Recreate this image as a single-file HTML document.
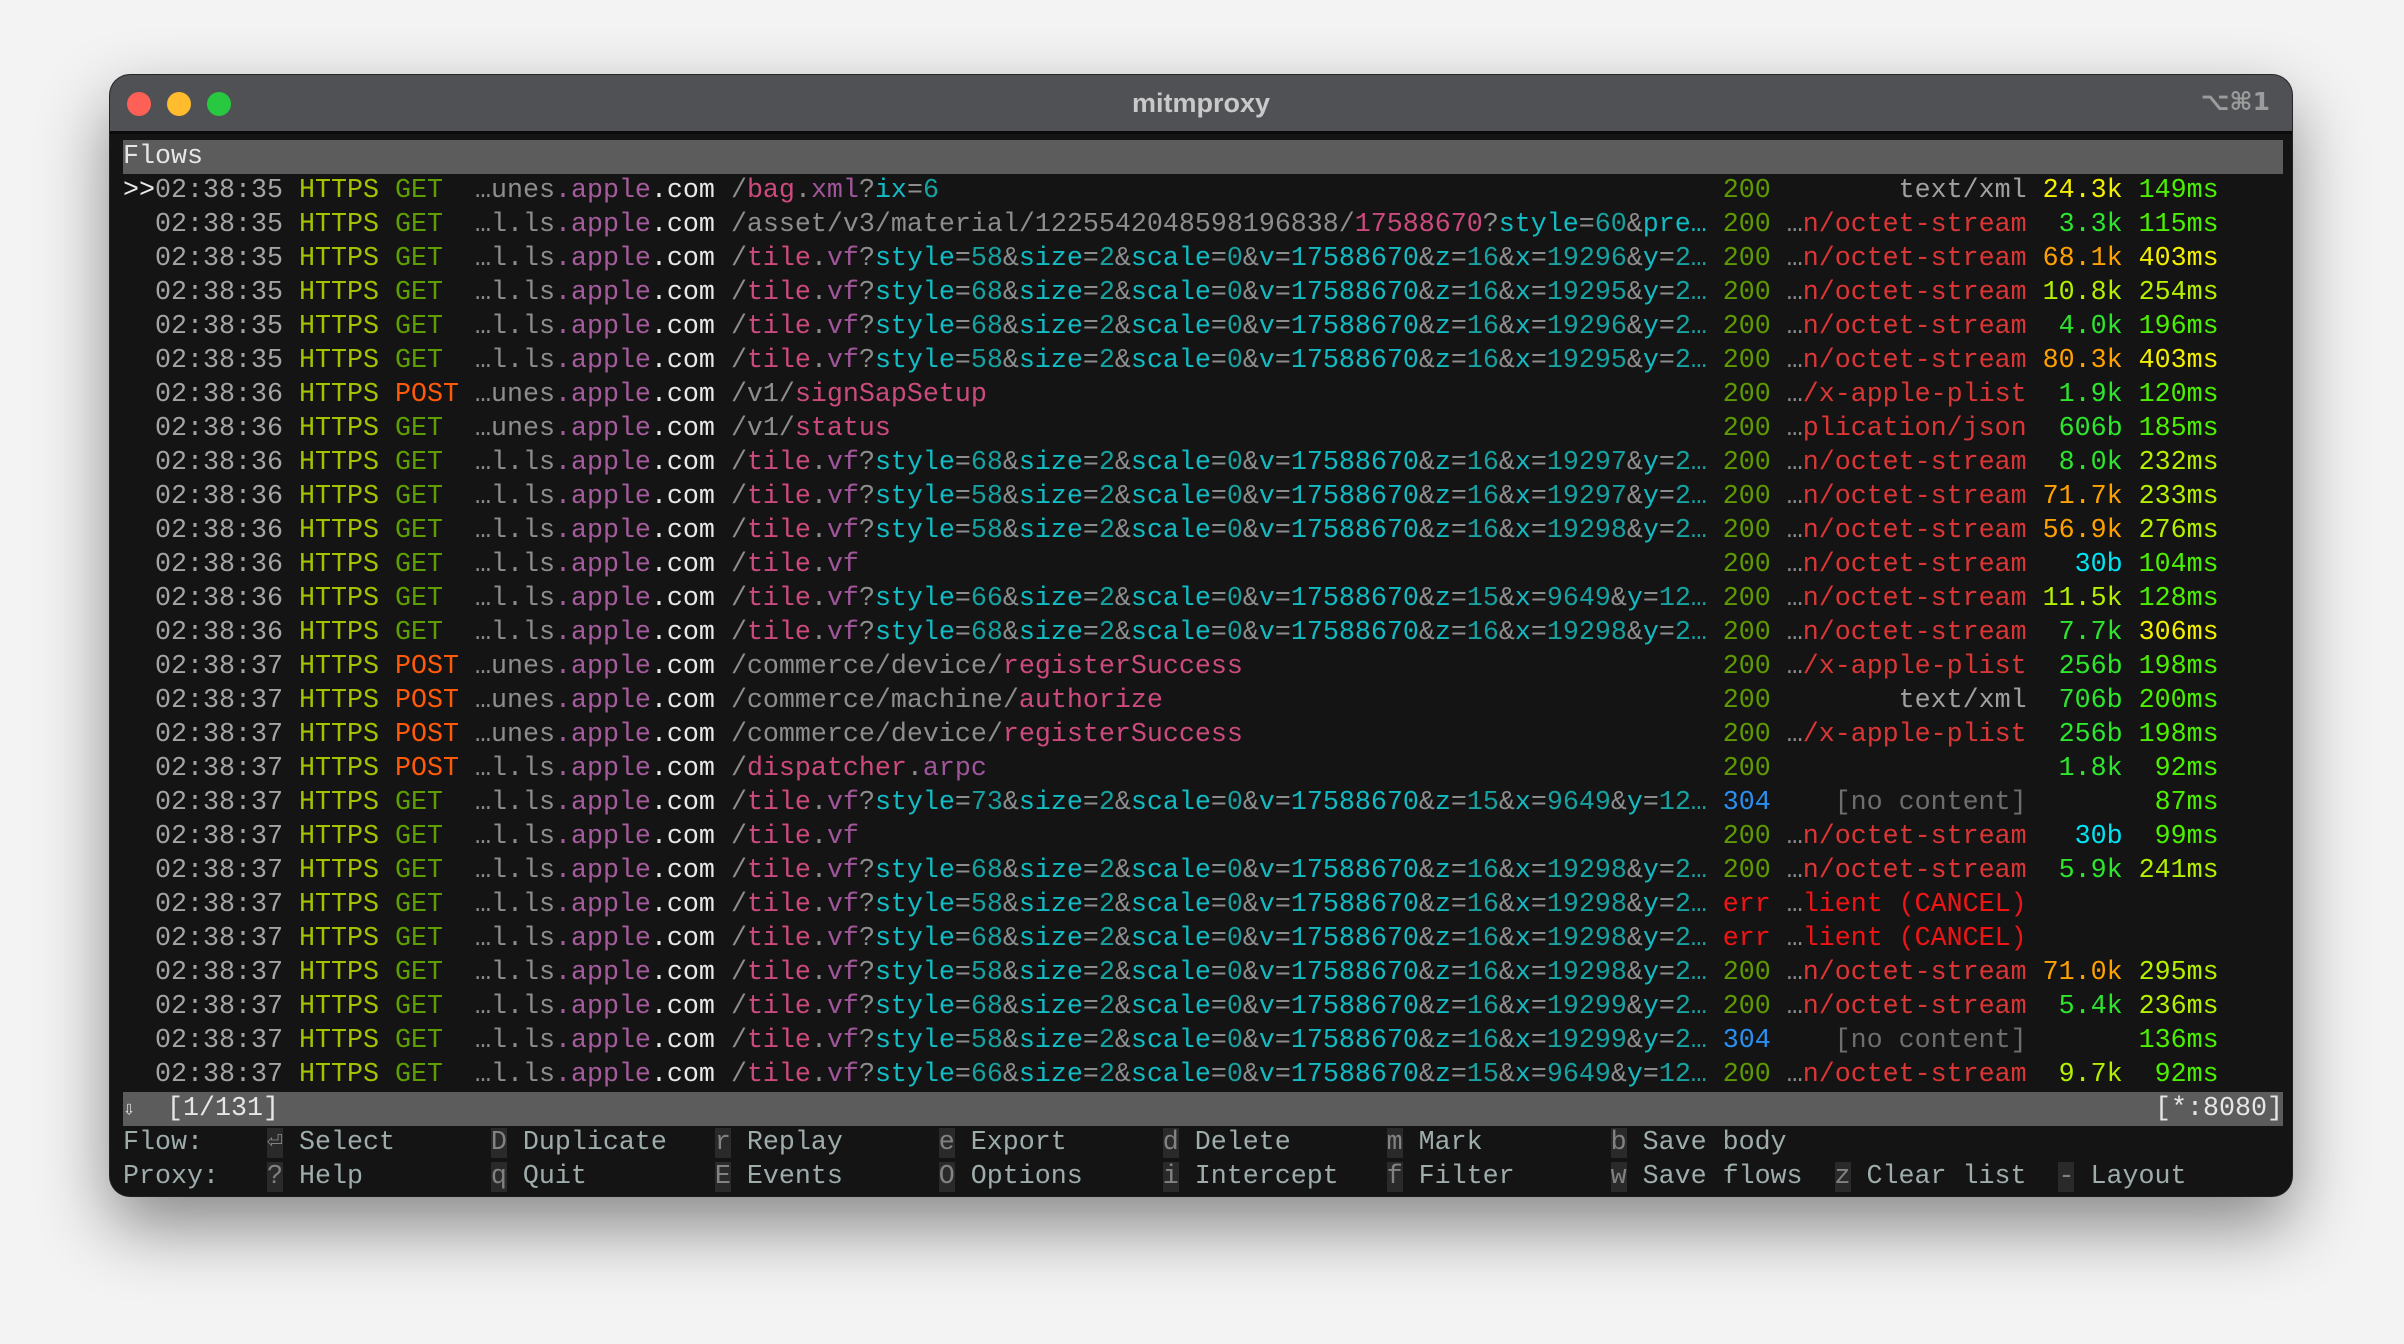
<!DOCTYPE html>
<html><head><meta charset="utf-8"><style>
html,body{margin:0;padding:0;width:2404px;height:1344px;background:#f3f3f3;overflow:hidden}
.win{position:absolute;left:110px;top:75px;width:2182px;height:1121px;border-radius:20px;background:#141414;box-shadow:0 30px 70px rgba(0,0,0,.45),0 0 0 1px #2a2a2a;overflow:hidden}
.tb{position:absolute;left:0;top:0;width:100%;height:56px;background:#505155;border-bottom:3px solid #0b0b0b}
.tt{position:absolute;left:0;right:0;top:13px;text-align:center;font:bold 27px "Liberation Sans",sans-serif;color:#c9c9c9}
.sc{position:absolute;right:22px;top:12px;font:bold 25px "DejaVu Sans","Liberation Sans",sans-serif;color:#9c9c9c}
.dot{position:absolute;top:17px;width:24px;height:24px;border-radius:50%}
.term{position:absolute;left:13px;top:65px;font-family:"Liberation Mono","DejaVu Sans Mono",monospace;font-size:26.667px;line-height:34px;color:#a8a8a8}
.term div{height:34px;width:2160px;white-space:pre;overflow:hidden}
.bar{background:#5c5c5c;color:#e6e6e6}
t{color:#a4a4a4}w{color:#a6c100}m{color:#5f9e00}o{color:#ff5a0a}d{color:#8d8d8d}l{color:#a45c9c}c{color:#e8e8e8}
r{color:#cc4a7e}y{color:#a0569a}k{color:#12bcc4}v{color:#17a2a2}n{color:#5e9a00}e{color:#db3636}z{color:#f01414}
bl{color:#2b8ff0}gr{color:#a0a0a0}nc{color:#6e6e6e}
x1{color:#2ee62e}x2{color:#f2f000}x3{color:#ffa200}x4{color:#b4f000}x5{color:#00e4f4}x6{color:#4cf000}
pp{display:inline-block;width:61ch}cc{display:inline-block;width:15ch;text-align:right}ss{display:inline-block;width:5ch;text-align:right}
g{display:inline-block;width:14ch;color:#9eacac}kk{background:#2a2a2a;color:#828282}
</style></head><body>
<div class="win">
<div class="tb"><div class="dot" style="left:17px;background:#fe5f57"></div><div class="dot" style="left:57px;background:#febc2e"></div><div class="dot" style="left:97px;background:#28c840"></div><div class="tt">mitmproxy</div><div class="sc">⌥⌘1</div></div>
<div class="term">
<div class="bar">Flows</div>
<div><c>&gt;&gt;</c><t>02:38:35</t> <w>HTTPS</w> <m>GET </m> <d>…unes</d><l>.apple</l><c>.com</c> <pp><d>/</d><r>bag</r><d>.</d><y>xml</y><d>?</d><k>ix</k><d>=</d><v>6</v></pp> <n>200</n> <cc><gr>text/xml</gr></cc> <ss><x2>24.3k</x2></ss> <ss><x6>149ms</x6></ss></div>
<div>  <t>02:38:35</t> <w>HTTPS</w> <m>GET </m> <d>…l.ls</d><l>.apple</l><c>.com</c> <pp><d>/asset/v3/material/1225542048598196838/</d><r>17588670</r><d>?</d><k>style</k><d>=</d><v>60</v><d>&amp;</d><k>pre…</k></pp> <n>200</n> <cc><d>…</d><e>n/octet-stream</e></cc> <ss><x1>3.3k</x1></ss> <ss><x6>115ms</x6></ss></div>
<div>  <t>02:38:35</t> <w>HTTPS</w> <m>GET </m> <d>…l.ls</d><l>.apple</l><c>.com</c> <pp><d>/</d><r>tile</r><d>.</d><y>vf</y><d>?</d><k>style</k><d>=</d><v>58</v><d>&amp;</d><k>size</k><d>=</d><v>2</v><d>&amp;</d><k>scale</k><d>=</d><v>0</v><d>&amp;</d><k>v</k><d>=</d><k>17588670</k><d>&amp;</d><k>z</k><d>=</d><v>16</v><d>&amp;</d><k>x</k><d>=</d><v>19296</v><d>&amp;</d><k>y</k><d>=</d><v>2…</v></pp> <n>200</n> <cc><d>…</d><e>n/octet-stream</e></cc> <ss><x3>68.1k</x3></ss> <ss><x2>403ms</x2></ss></div>
<div>  <t>02:38:35</t> <w>HTTPS</w> <m>GET </m> <d>…l.ls</d><l>.apple</l><c>.com</c> <pp><d>/</d><r>tile</r><d>.</d><y>vf</y><d>?</d><k>style</k><d>=</d><v>68</v><d>&amp;</d><k>size</k><d>=</d><v>2</v><d>&amp;</d><k>scale</k><d>=</d><v>0</v><d>&amp;</d><k>v</k><d>=</d><k>17588670</k><d>&amp;</d><k>z</k><d>=</d><v>16</v><d>&amp;</d><k>x</k><d>=</d><v>19295</v><d>&amp;</d><k>y</k><d>=</d><v>2…</v></pp> <n>200</n> <cc><d>…</d><e>n/octet-stream</e></cc> <ss><x4>10.8k</x4></ss> <ss><x4>254ms</x4></ss></div>
<div>  <t>02:38:35</t> <w>HTTPS</w> <m>GET </m> <d>…l.ls</d><l>.apple</l><c>.com</c> <pp><d>/</d><r>tile</r><d>.</d><y>vf</y><d>?</d><k>style</k><d>=</d><v>68</v><d>&amp;</d><k>size</k><d>=</d><v>2</v><d>&amp;</d><k>scale</k><d>=</d><v>0</v><d>&amp;</d><k>v</k><d>=</d><k>17588670</k><d>&amp;</d><k>z</k><d>=</d><v>16</v><d>&amp;</d><k>x</k><d>=</d><v>19296</v><d>&amp;</d><k>y</k><d>=</d><v>2…</v></pp> <n>200</n> <cc><d>…</d><e>n/octet-stream</e></cc> <ss><x1>4.0k</x1></ss> <ss><x6>196ms</x6></ss></div>
<div>  <t>02:38:35</t> <w>HTTPS</w> <m>GET </m> <d>…l.ls</d><l>.apple</l><c>.com</c> <pp><d>/</d><r>tile</r><d>.</d><y>vf</y><d>?</d><k>style</k><d>=</d><v>58</v><d>&amp;</d><k>size</k><d>=</d><v>2</v><d>&amp;</d><k>scale</k><d>=</d><v>0</v><d>&amp;</d><k>v</k><d>=</d><k>17588670</k><d>&amp;</d><k>z</k><d>=</d><v>16</v><d>&amp;</d><k>x</k><d>=</d><v>19295</v><d>&amp;</d><k>y</k><d>=</d><v>2…</v></pp> <n>200</n> <cc><d>…</d><e>n/octet-stream</e></cc> <ss><x3>80.3k</x3></ss> <ss><x2>403ms</x2></ss></div>
<div>  <t>02:38:36</t> <w>HTTPS</w> <o>POST</o> <d>…unes</d><l>.apple</l><c>.com</c> <pp><d>/v1/</d><r>signSapSetup</r></pp> <n>200</n> <cc><d>…</d><e>/x-apple-plist</e></cc> <ss><x1>1.9k</x1></ss> <ss><x6>120ms</x6></ss></div>
<div>  <t>02:38:36</t> <w>HTTPS</w> <m>GET </m> <d>…unes</d><l>.apple</l><c>.com</c> <pp><d>/v1/</d><r>status</r></pp> <n>200</n> <cc><d>…</d><e>plication/json</e></cc> <ss><x1>606b</x1></ss> <ss><x6>185ms</x6></ss></div>
<div>  <t>02:38:36</t> <w>HTTPS</w> <m>GET </m> <d>…l.ls</d><l>.apple</l><c>.com</c> <pp><d>/</d><r>tile</r><d>.</d><y>vf</y><d>?</d><k>style</k><d>=</d><v>68</v><d>&amp;</d><k>size</k><d>=</d><v>2</v><d>&amp;</d><k>scale</k><d>=</d><v>0</v><d>&amp;</d><k>v</k><d>=</d><k>17588670</k><d>&amp;</d><k>z</k><d>=</d><v>16</v><d>&amp;</d><k>x</k><d>=</d><v>19297</v><d>&amp;</d><k>y</k><d>=</d><v>2…</v></pp> <n>200</n> <cc><d>…</d><e>n/octet-stream</e></cc> <ss><x1>8.0k</x1></ss> <ss><x4>232ms</x4></ss></div>
<div>  <t>02:38:36</t> <w>HTTPS</w> <m>GET </m> <d>…l.ls</d><l>.apple</l><c>.com</c> <pp><d>/</d><r>tile</r><d>.</d><y>vf</y><d>?</d><k>style</k><d>=</d><v>58</v><d>&amp;</d><k>size</k><d>=</d><v>2</v><d>&amp;</d><k>scale</k><d>=</d><v>0</v><d>&amp;</d><k>v</k><d>=</d><k>17588670</k><d>&amp;</d><k>z</k><d>=</d><v>16</v><d>&amp;</d><k>x</k><d>=</d><v>19297</v><d>&amp;</d><k>y</k><d>=</d><v>2…</v></pp> <n>200</n> <cc><d>…</d><e>n/octet-stream</e></cc> <ss><x3>71.7k</x3></ss> <ss><x4>233ms</x4></ss></div>
<div>  <t>02:38:36</t> <w>HTTPS</w> <m>GET </m> <d>…l.ls</d><l>.apple</l><c>.com</c> <pp><d>/</d><r>tile</r><d>.</d><y>vf</y><d>?</d><k>style</k><d>=</d><v>58</v><d>&amp;</d><k>size</k><d>=</d><v>2</v><d>&amp;</d><k>scale</k><d>=</d><v>0</v><d>&amp;</d><k>v</k><d>=</d><k>17588670</k><d>&amp;</d><k>z</k><d>=</d><v>16</v><d>&amp;</d><k>x</k><d>=</d><v>19298</v><d>&amp;</d><k>y</k><d>=</d><v>2…</v></pp> <n>200</n> <cc><d>…</d><e>n/octet-stream</e></cc> <ss><x3>56.9k</x3></ss> <ss><x4>276ms</x4></ss></div>
<div>  <t>02:38:36</t> <w>HTTPS</w> <m>GET </m> <d>…l.ls</d><l>.apple</l><c>.com</c> <pp><d>/</d><r>tile</r><d>.</d><y>vf</y></pp> <n>200</n> <cc><d>…</d><e>n/octet-stream</e></cc> <ss><x5>30b</x5></ss> <ss><x6>104ms</x6></ss></div>
<div>  <t>02:38:36</t> <w>HTTPS</w> <m>GET </m> <d>…l.ls</d><l>.apple</l><c>.com</c> <pp><d>/</d><r>tile</r><d>.</d><y>vf</y><d>?</d><k>style</k><d>=</d><v>66</v><d>&amp;</d><k>size</k><d>=</d><v>2</v><d>&amp;</d><k>scale</k><d>=</d><v>0</v><d>&amp;</d><k>v</k><d>=</d><k>17588670</k><d>&amp;</d><k>z</k><d>=</d><v>15</v><d>&amp;</d><k>x</k><d>=</d><v>9649</v><d>&amp;</d><k>y</k><d>=</d><v>12…</v></pp> <n>200</n> <cc><d>…</d><e>n/octet-stream</e></cc> <ss><x4>11.5k</x4></ss> <ss><x6>128ms</x6></ss></div>
<div>  <t>02:38:36</t> <w>HTTPS</w> <m>GET </m> <d>…l.ls</d><l>.apple</l><c>.com</c> <pp><d>/</d><r>tile</r><d>.</d><y>vf</y><d>?</d><k>style</k><d>=</d><v>68</v><d>&amp;</d><k>size</k><d>=</d><v>2</v><d>&amp;</d><k>scale</k><d>=</d><v>0</v><d>&amp;</d><k>v</k><d>=</d><k>17588670</k><d>&amp;</d><k>z</k><d>=</d><v>16</v><d>&amp;</d><k>x</k><d>=</d><v>19298</v><d>&amp;</d><k>y</k><d>=</d><v>2…</v></pp> <n>200</n> <cc><d>…</d><e>n/octet-stream</e></cc> <ss><x1>7.7k</x1></ss> <ss><x2>306ms</x2></ss></div>
<div>  <t>02:38:37</t> <w>HTTPS</w> <o>POST</o> <d>…unes</d><l>.apple</l><c>.com</c> <pp><d>/commerce/device/</d><r>registerSuccess</r></pp> <n>200</n> <cc><d>…</d><e>/x-apple-plist</e></cc> <ss><x1>256b</x1></ss> <ss><x6>198ms</x6></ss></div>
<div>  <t>02:38:37</t> <w>HTTPS</w> <o>POST</o> <d>…unes</d><l>.apple</l><c>.com</c> <pp><d>/commerce/machine/</d><r>authorize</r></pp> <n>200</n> <cc><gr>text/xml</gr></cc> <ss><x1>706b</x1></ss> <ss><x6>200ms</x6></ss></div>
<div>  <t>02:38:37</t> <w>HTTPS</w> <o>POST</o> <d>…unes</d><l>.apple</l><c>.com</c> <pp><d>/commerce/device/</d><r>registerSuccess</r></pp> <n>200</n> <cc><d>…</d><e>/x-apple-plist</e></cc> <ss><x1>256b</x1></ss> <ss><x6>198ms</x6></ss></div>
<div>  <t>02:38:37</t> <w>HTTPS</w> <o>POST</o> <d>…l.ls</d><l>.apple</l><c>.com</c> <pp><d>/</d><r>dispatcher</r><d>.</d><y>arpc</y></pp> <n>200</n> <cc></cc> <ss><x1>1.8k</x1></ss> <ss><x6>92ms</x6></ss></div>
<div>  <t>02:38:37</t> <w>HTTPS</w> <m>GET </m> <d>…l.ls</d><l>.apple</l><c>.com</c> <pp><d>/</d><r>tile</r><d>.</d><y>vf</y><d>?</d><k>style</k><d>=</d><v>73</v><d>&amp;</d><k>size</k><d>=</d><v>2</v><d>&amp;</d><k>scale</k><d>=</d><v>0</v><d>&amp;</d><k>v</k><d>=</d><k>17588670</k><d>&amp;</d><k>z</k><d>=</d><v>15</v><d>&amp;</d><k>x</k><d>=</d><v>9649</v><d>&amp;</d><k>y</k><d>=</d><v>12…</v></pp> <bl>304</bl> <cc><nc>[no content]</nc></cc> <ss></ss> <ss><x6>87ms</x6></ss></div>
<div>  <t>02:38:37</t> <w>HTTPS</w> <m>GET </m> <d>…l.ls</d><l>.apple</l><c>.com</c> <pp><d>/</d><r>tile</r><d>.</d><y>vf</y></pp> <n>200</n> <cc><d>…</d><e>n/octet-stream</e></cc> <ss><x5>30b</x5></ss> <ss><x6>99ms</x6></ss></div>
<div>  <t>02:38:37</t> <w>HTTPS</w> <m>GET </m> <d>…l.ls</d><l>.apple</l><c>.com</c> <pp><d>/</d><r>tile</r><d>.</d><y>vf</y><d>?</d><k>style</k><d>=</d><v>68</v><d>&amp;</d><k>size</k><d>=</d><v>2</v><d>&amp;</d><k>scale</k><d>=</d><v>0</v><d>&amp;</d><k>v</k><d>=</d><k>17588670</k><d>&amp;</d><k>z</k><d>=</d><v>16</v><d>&amp;</d><k>x</k><d>=</d><v>19298</v><d>&amp;</d><k>y</k><d>=</d><v>2…</v></pp> <n>200</n> <cc><d>…</d><e>n/octet-stream</e></cc> <ss><x1>5.9k</x1></ss> <ss><x4>241ms</x4></ss></div>
<div>  <t>02:38:37</t> <w>HTTPS</w> <m>GET </m> <d>…l.ls</d><l>.apple</l><c>.com</c> <pp><d>/</d><r>tile</r><d>.</d><y>vf</y><d>?</d><k>style</k><d>=</d><v>58</v><d>&amp;</d><k>size</k><d>=</d><v>2</v><d>&amp;</d><k>scale</k><d>=</d><v>0</v><d>&amp;</d><k>v</k><d>=</d><k>17588670</k><d>&amp;</d><k>z</k><d>=</d><v>16</v><d>&amp;</d><k>x</k><d>=</d><v>19298</v><d>&amp;</d><k>y</k><d>=</d><v>2…</v></pp> <z>err</z> <cc><d>…</d><z>lient (CANCEL)</z></cc></div>
<div>  <t>02:38:37</t> <w>HTTPS</w> <m>GET </m> <d>…l.ls</d><l>.apple</l><c>.com</c> <pp><d>/</d><r>tile</r><d>.</d><y>vf</y><d>?</d><k>style</k><d>=</d><v>68</v><d>&amp;</d><k>size</k><d>=</d><v>2</v><d>&amp;</d><k>scale</k><d>=</d><v>0</v><d>&amp;</d><k>v</k><d>=</d><k>17588670</k><d>&amp;</d><k>z</k><d>=</d><v>16</v><d>&amp;</d><k>x</k><d>=</d><v>19298</v><d>&amp;</d><k>y</k><d>=</d><v>2…</v></pp> <z>err</z> <cc><d>…</d><z>lient (CANCEL)</z></cc></div>
<div>  <t>02:38:37</t> <w>HTTPS</w> <m>GET </m> <d>…l.ls</d><l>.apple</l><c>.com</c> <pp><d>/</d><r>tile</r><d>.</d><y>vf</y><d>?</d><k>style</k><d>=</d><v>58</v><d>&amp;</d><k>size</k><d>=</d><v>2</v><d>&amp;</d><k>scale</k><d>=</d><v>0</v><d>&amp;</d><k>v</k><d>=</d><k>17588670</k><d>&amp;</d><k>z</k><d>=</d><v>16</v><d>&amp;</d><k>x</k><d>=</d><v>19298</v><d>&amp;</d><k>y</k><d>=</d><v>2…</v></pp> <n>200</n> <cc><d>…</d><e>n/octet-stream</e></cc> <ss><x3>71.0k</x3></ss> <ss><x4>295ms</x4></ss></div>
<div>  <t>02:38:37</t> <w>HTTPS</w> <m>GET </m> <d>…l.ls</d><l>.apple</l><c>.com</c> <pp><d>/</d><r>tile</r><d>.</d><y>vf</y><d>?</d><k>style</k><d>=</d><v>68</v><d>&amp;</d><k>size</k><d>=</d><v>2</v><d>&amp;</d><k>scale</k><d>=</d><v>0</v><d>&amp;</d><k>v</k><d>=</d><k>17588670</k><d>&amp;</d><k>z</k><d>=</d><v>16</v><d>&amp;</d><k>x</k><d>=</d><v>19299</v><d>&amp;</d><k>y</k><d>=</d><v>2…</v></pp> <n>200</n> <cc><d>…</d><e>n/octet-stream</e></cc> <ss><x1>5.4k</x1></ss> <ss><x4>236ms</x4></ss></div>
<div>  <t>02:38:37</t> <w>HTTPS</w> <m>GET </m> <d>…l.ls</d><l>.apple</l><c>.com</c> <pp><d>/</d><r>tile</r><d>.</d><y>vf</y><d>?</d><k>style</k><d>=</d><v>58</v><d>&amp;</d><k>size</k><d>=</d><v>2</v><d>&amp;</d><k>scale</k><d>=</d><v>0</v><d>&amp;</d><k>v</k><d>=</d><k>17588670</k><d>&amp;</d><k>z</k><d>=</d><v>16</v><d>&amp;</d><k>x</k><d>=</d><v>19299</v><d>&amp;</d><k>y</k><d>=</d><v>2…</v></pp> <bl>304</bl> <cc><nc>[no content]</nc></cc> <ss></ss> <ss><x6>136ms</x6></ss></div>
<div>  <t>02:38:37</t> <w>HTTPS</w> <m>GET </m> <d>…l.ls</d><l>.apple</l><c>.com</c> <pp><d>/</d><r>tile</r><d>.</d><y>vf</y><d>?</d><k>style</k><d>=</d><v>66</v><d>&amp;</d><k>size</k><d>=</d><v>2</v><d>&amp;</d><k>scale</k><d>=</d><v>0</v><d>&amp;</d><k>v</k><d>=</d><k>17588670</k><d>&amp;</d><k>z</k><d>=</d><v>15</v><d>&amp;</d><k>x</k><d>=</d><v>9649</v><d>&amp;</d><k>y</k><d>=</d><v>12…</v></pp> <n>200</n> <cc><d>…</d><e>n/octet-stream</e></cc> <ss><x4>9.7k</x4></ss> <ss><x6>92ms</x6></ss></div>
<div class="bar" style="position:relative"><span style="font-size:20px">⇩</span>  [1/131]<span style="position:absolute;right:0;top:0">[*:8080]</span></div>
<div style="color:#9eacac">Flow:    <g><kk>⏎</kk> Select</g><g><kk>D</kk> Duplicate</g><g><kk>r</kk> Replay</g><g><kk>e</kk> Export</g><g><kk>d</kk> Delete</g><g><kk>m</kk> Mark</g><g><kk>b</kk> Save body</g></div>
<div style="color:#9eacac">Proxy:   <g><kk>?</kk> Help</g><g><kk>q</kk> Quit</g><g><kk>E</kk> Events</g><g><kk>O</kk> Options</g><g><kk>i</kk> Intercept</g><g><kk>f</kk> Filter</g><g><kk>w</kk> Save flows</g><g><kk>z</kk> Clear list</g><g><kk>-</kk> Layout</g></div>
</div>
</div>
</body></html>
